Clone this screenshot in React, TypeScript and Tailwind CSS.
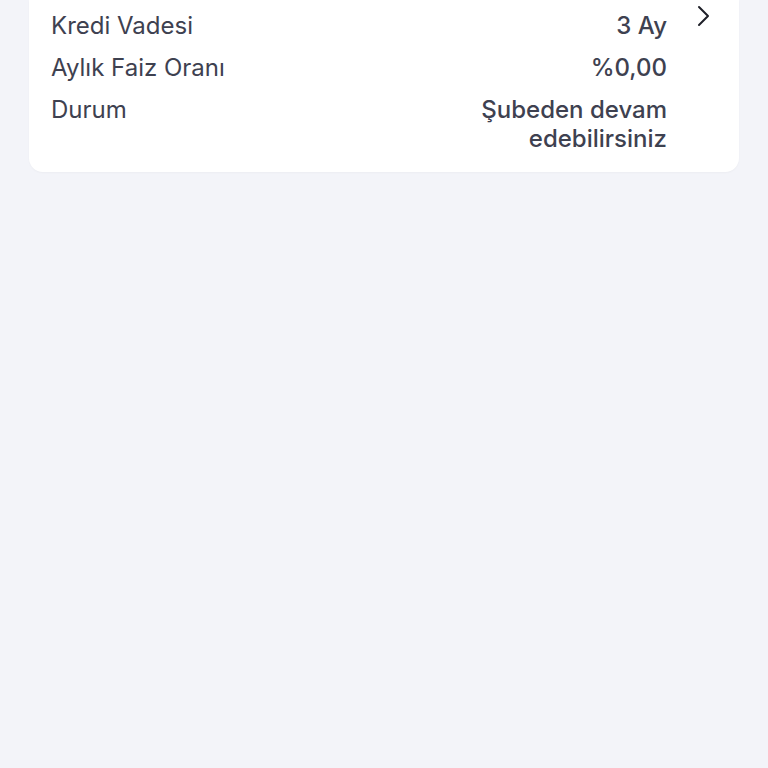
export default function App() {
  const rows = [
    { label: "Kredi Vadesi", value: "3 Ay" },
    { label: "Aylık Faiz Oranı", value: "%0,00" },
    { label: "Durum", value: "Şubeden devam edebilirsiniz" },
  ];

  return (
    <div
      className="min-h-screen bg-[#f3f4f9] px-[29px] text-[#3e4150]"
      style={{ fontFamily: "Inter, 'Noto Sans', sans-serif" }}
    >
      {/* Detail card (top is scrolled off-screen) */}
      <div className="flex items-start rounded-b-[14px] bg-white pb-[19px] pl-[22px] pr-[24px] pt-[11px] shadow-[0_1px_2px_rgba(0,0,0,0.03)]">
        <div className="flex flex-1 flex-col gap-[13px]">
          {rows.map((row) => (
            <div key={row.label} className="flex items-start justify-between">
              <span className="text-[24px] leading-[29px]">{row.label}</span>
              <span className="max-w-[200px] text-right text-[24px] font-medium leading-[29px]">
                {row.value}
              </span>
            </div>
          ))}
        </div>
        <div className="ml-[24px] -mt-[7px] flex w-[24px] justify-center">
          <svg
            width="24"
            height="24"
            viewBox="0 0 24 24"
            fill="none"
            stroke="#1f2029"
            strokeWidth="2"
            strokeLinecap="round"
            strokeLinejoin="round"
          >
            <path d="M8 3l9 9-9 9" />
          </svg>
        </div>
      </div>
    </div>
  );
}
